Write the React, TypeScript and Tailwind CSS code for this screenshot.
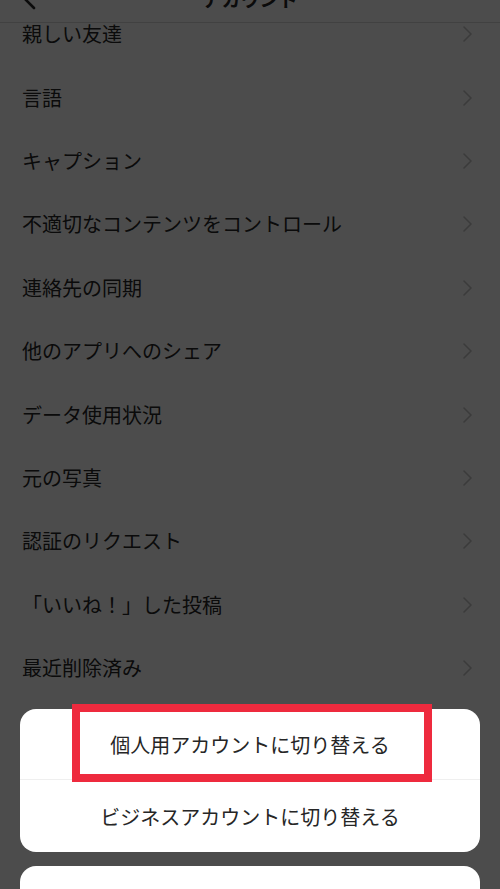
import React from 'react'

const items = [
  '親しい友達',
  '言語',
  'キャプション',
  '不適切なコンテンツをコントロール',
  '連絡先の同期',
  '他のアプリへのシェア',
  'データ使用状況',
  '元の写真',
  '認証のリクエスト',
  '「いいね！」した投稿',
  '最近削除済み',
]

function Chevron() {
  return (
    <svg width="9" height="16" viewBox="0 0 9 16" fill="none">
      <path d="M1 1l7 7-7 7" stroke="#c7c7c7" strokeWidth="1.6" strokeLinecap="round" strokeLinejoin="round" />
    </svg>
  )
}

export default function App() {
  return (
    <div className="relative h-[889px] w-[500px] overflow-hidden bg-white font-['Noto_Sans_CJK_JP','Noto_Sans',sans-serif] text-[#262626]">
      {/* ヘッダー（上が切れている） */}
      <div className="relative z-10 h-[23px] overflow-hidden border-b border-[#dbdbdb] bg-white">
        <div className="relative -mt-[24px] flex h-[44px] items-center justify-center">
          <svg className="absolute left-[22px] top-[12px]" width="14" height="22" viewBox="0 0 14 22" fill="none">
            <path d="M12 2L3 11l9 9" stroke="#262626" strokeWidth="2.6" strokeLinecap="round" strokeLinejoin="round" />
          </svg>
          <span className="text-[19px] leading-none font-bold">アカウント</span>
        </div>
      </div>

      {/* 設定リスト */}
      <div className="-mt-[20.5px]">
        {items.map((label) => (
          <div key={label} className="flex h-[63.4px] items-center justify-between pl-[22px] pr-[28px]">
            <span className="text-[20px] leading-none">{label}</span>
            <Chevron />
          </div>
        ))}
      </div>

      {/* オーバーレイ + アクションシート */}
      <div className="absolute inset-0 z-20 flex flex-col justify-end bg-black/70 px-5">
        <div className="relative rounded-2xl bg-white">
          <div className="flex h-[71px] items-center justify-center border-b border-[#efefef] pt-[2px]">
            <span className="text-[20px] leading-none">個人用アカウントに切り替える</span>
          </div>
          <div className="flex h-[72px] items-center justify-center pt-[2px]">
            <span className="text-[20px] leading-none">ビジネスアカウントに切り替える</span>
          </div>
          <div className="absolute left-[52px] top-[-5px] h-[78px] w-[360px] border-[8px] border-[#ee2a3e]" />
        </div>
        <div className="mt-[14px] -mb-[49px] flex h-[72px] items-center justify-center rounded-2xl bg-white">
          <span className="text-[20px] leading-none">キャンセル</span>
        </div>
      </div>
    </div>
  )
}
